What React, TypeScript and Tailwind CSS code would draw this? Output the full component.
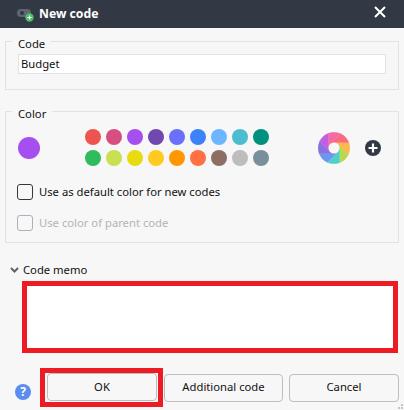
import React from "react";

const row1 = ["#ef5350", "#d64f80", "#a64ff0", "#7048b0", "#6a70fa", "#3d82f7", "#6db6ff", "#4cbccf", "#009080"];
const row2 = ["#30bb5c", "#c8e052", "#e8dc10", "#ffca20", "#ff9800", "#ff7043", "#8d6e63", "#bdbdbd", "#78909c"];

function Wheel() {
  const cx = 16, cy = 16, R = 15.8, r = 5.5;
  const colors = ["#ffb84d", "#b8d850", "#50d0c8", "#6a98f0", "#8a70e0", "#c05fe0", "#f26aa6", "#fa6a80"];
  const pt = (rad: number, deg: number) => {
    const a = (deg * Math.PI) / 180;
    return `${cx + rad * Math.cos(a)} ${cy + rad * Math.sin(a)}`;
  };
  return (
    <svg width="32" height="32" viewBox="0 0 32 32" className="block">
      {colors.map((c, i) => {
        const s = -20 + i * 45;
        const e = s + 45;
        return <path key={c} d={`M${pt(R, s)}A${R} ${R} 0 0 1 ${pt(R, e)}L${pt(r, e - 70)}L${pt(r, s - 70)}Z`} fill={c} stroke={c} strokeWidth="0.4" />;
      })}
      <circle cx={cx} cy={cy} r={r} fill="#f7f7f7" />
    </svg>
  );
}

function Check({ disabled, label }: { disabled?: boolean; label: string }) {
  return (
    <div className="flex items-center gap-[6px] -ml-px">
      <span className={`w-[16px] h-[16px] rounded-[3px] border-[1.5px] bg-[#f7f7f7] ${disabled ? "border-[#aab2bd]" : "border-[#323945]"}`} />
      <span className={disabled ? "text-[#b4b4b4]" : "text-[#111111]"}>{label}</span>
    </div>
  );
}

function Btn({ label, cls }: { label: string; cls: string }) {
  return (
    <button className={`h-[28px] rounded-[4px] border border-[#bdbdbd] bg-[#f7f7f7] text-[#111111] ${cls}`}>{label}</button>
  );
}

export default function App() {
  return (
    <div className="w-[404px] h-[410px] overflow-hidden relative flex flex-col bg-[#f7f7f7] text-[11.25px] text-[#111111] font-['Noto_Sans','Open_Sans',sans-serif]">
      <header className="h-[28px] bg-[#323945] flex items-center pl-[17px] pr-[18px] text-white">
        <svg width="17" height="14" viewBox="0 0 17 14" className="mt-[1px]">
          <rect x="0" y="1" width="14" height="8" rx="4" fill="#5f6670" />
          <circle cx="5" cy="5" r="2" fill="#323945" />
          <circle cx="12.5" cy="9.5" r="4.2" fill="#4fbf67" />
          <path d="M12.5 7.4v4.2M10.4 9.5h4.2" stroke="#fff" strokeWidth="1.2" />
        </svg>
        <span className="ml-[5px] font-bold text-[12.2px]">New code</span>
        <svg width="12" height="12" viewBox="0 0 12 12" className="ml-auto -mt-[4px]">
          <path d="M1 1l10 10M11 1L1 11" stroke="#fff" strokeWidth="2" />
        </svg>
      </header>

      <section className="relative mt-[13px] mx-[5px] h-[49px] border border-[#e2e2e2] pt-[12px] pl-[12px] pr-[12px]">
        <span className="absolute left-[6px] -top-[6px] px-[6px] h-[16px] leading-[16px] bg-[#f7f7f7]">Code</span>
        <div className="h-[20px] border border-[#e2e2e2] bg-white pl-[2px] leading-[18px]">Budget</div>
      </section>

      <section className="relative mt-[21px] mx-[5px] h-[132px] border border-[#e2e2e2] pl-[12px] pr-[12px] pt-[17px]">
        <span className="absolute left-[6px] -top-[6px] px-[6px] h-[16px] leading-[16px] bg-[#f7f7f7]">Color</span>
        <div className="flex items-center h-[37px]">
          <span className="w-[22px] h-[22px] rounded-full bg-[#a64ff0]" />
          <div className="ml-[45px] flex flex-col gap-[5px]">
            {[row1, row2].map((row, i) => (
              <div key={i} className="flex gap-[5px]">
                {row.map((c) => (
                  <span key={c} className="w-[16px] h-[16px] rounded-full" style={{ backgroundColor: c }} />
                ))}
              </div>
            ))}
          </div>
          <div className="ml-[49px]"><Wheel /></div>
          <svg width="16" height="16" viewBox="0 0 16 16" className="ml-[15px]">
            <circle cx="8" cy="8" r="8" fill="#323945" />
            <path d="M8 3.5v9M3.5 8h9" stroke="#fff" strokeWidth="2.2" />
          </svg>
        </div>
        <div className="mt-[18px] flex flex-col gap-[14px]">
          <Check label="Use as default color for new codes" />
          <Check disabled label="Use color of parent code" />
        </div>
      </section>

      <div className="mt-[19px] pl-[10px] h-[16px] flex items-center">
        <svg width="9" height="6" viewBox="0 0 9 6">
          <path d="M1 1l3.5 3.5L8 1" fill="none" stroke="#5a6470" strokeWidth="2" />
        </svg>
        <span className="ml-[4px]">Code memo</span>
      </div>
      <div className="mt-[3px] ml-[22px] w-[376px] h-[72px] border-[5px] border-[#ed1c24] bg-white" />

      <footer className="mt-[15px] flex items-center pl-[15px]">
        <span className="mt-[8px] w-[16px] h-[16px] rounded-full bg-[#5b8def] text-white text-[12px] font-bold flex items-center justify-center">?</span>
        <div className="ml-[9px] w-[123px] h-[39px] border-[5px] border-[#ed1c24] pl-[2px] pt-0">
          <Btn label="OK" cls="w-[110px]" />
        </div>
        <Btn label="Additional code" cls="ml-[1px] w-[119px]" />
        <Btn label="Cancel" cls="ml-[6px] w-[110px]" />
      </footer>

      <svg width="9" height="6" viewBox="0 0 9 6" className="absolute right-0 bottom-0">
        <path d="M6 0h2v2H6zM3 3h2v2H3zM6 3h2v2H6z" fill="#c4c4c4" />
      </svg>
    </div>
  );
}
